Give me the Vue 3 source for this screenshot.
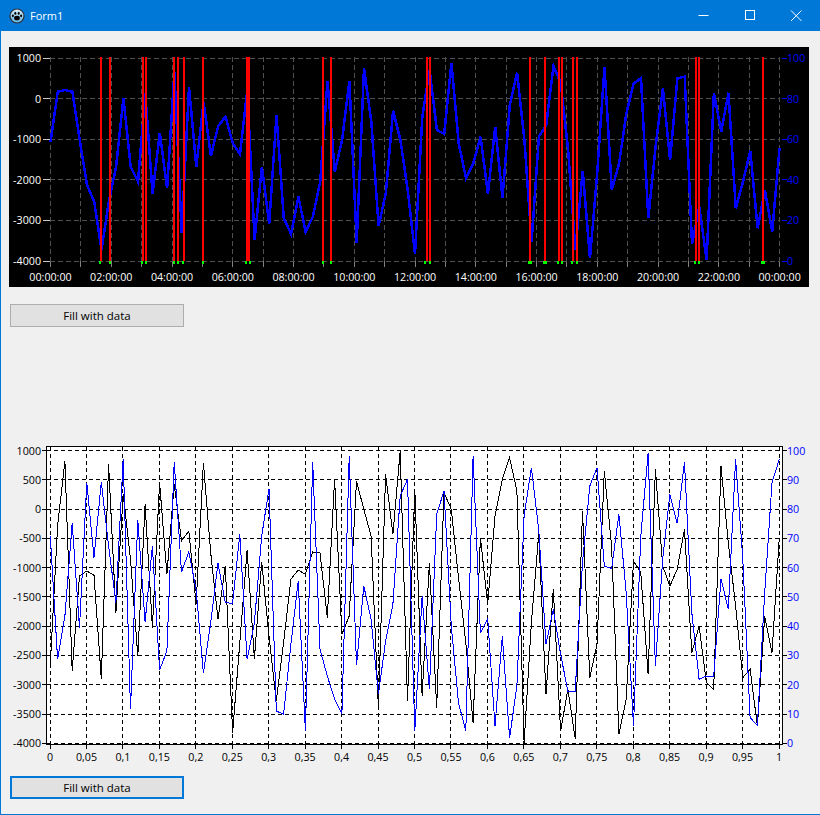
<script setup>
// step between two samples of a series, in px
const STEP = 7.29

// top chart: blue series, y in page px
const topSeries = [
  141.7, 91.7, 90, 91.7, 140, 185, 201.7, 250, 201.7, 166.7,
  98.3, 166.7, 181.7, 93.3, 194, 132.7, 188.3, 71.7, 232.7, 86.7,
  166.7, 101.7, 156, 126, 116.7, 143.3, 154, 90, 240, 166.7,
  224, 115, 218.3, 234, 196.7, 231.7, 216.7, 181.7, 80.7, 171.7,
  140, 80.7, 242.7, 68.3, 121.7, 226, 193.3, 110.7, 140, 190,
  254, 116.7, 70, 130, 134, 62.7, 143.3, 178.3, 163.3, 136.7,
  194, 126.7, 198.3, 105, 72.7, 140, 241.7, 136.7, 125, 66,
  83.3, 150, 250, 170.7, 258.3, 171.7, 66.7, 190, 163.3, 113.3,
  83.3, 78.3, 218.3, 146.7, 88.3, 160, 78.3, 76.7, 244, 206.7,
  260, 92.7, 131.7, 92.7, 208.3, 181.7, 150.7, 228.3, 190, 231.7,
  148.3
]

// red markers and the green points at their feet
const redLines = [101, 110, 143, 146, 174, 178, 184, 203, 247, 249, 323, 331, 427, 430, 530, 545, 559, 562, 573, 577, 696, 699, 763]
const greenDots = [100, 110, 142, 146, 174, 178, 183, 203, 246, 250, 323, 331, 425, 430, 529, 531, 544, 546, 558, 562, 572, 577, 695, 699, 762, 764]

// bottom chart: y in thirds of a px below the top of the plot
const blackTrace = [
  655, 240, 45, 675, 390, 375, 388, 698, 55, 500,
  145, 340, 630, 175, 545, 110, 385, 115, 285, 255,
  475, 50, 320, 520, 360, 860, 590, 312, 638, 348,
  570, 765, 590, 400, 372, 385, 318, 320, 515, 100,
  565, 510, 105, 190, 270, 785, 85, 265, 15, 765,
  130, 750, 350, 785, 140, 190, 395, 590, 830, 275,
  475, 210, 100, 35, 135, 890, 530, 265, 745, 430,
  855, 730, 878, 195, 695, 595, 75, 300, 865, 760,
  345, 380, 685, 70, 360, 420, 370, 250, 620, 540,
  710, 730, 60, 290, 480, 695, 670, 840, 510, 620,
  275
]
const blueTrace = [
  270, 640, 510, 232, 545, 110, 335, 108, 300, 470,
  38, 790, 222, 528, 300, 672, 615, 48, 378, 318,
  430, 682, 530, 352, 470, 472, 265, 640, 530, 270,
  128, 795, 805, 595, 405, 855, 48, 610, 690, 760,
  802, 30, 658, 420, 520, 745, 585, 475, 150, 100,
  855, 450, 730, 205, 135, 540, 770, 855, 30, 562,
  518, 840, 570, 875, 720, 210, 65, 250, 595, 490,
  625, 735, 735, 350, 120, 65, 360, 368, 205, 440,
  840, 270, 22, 660, 340, 145, 232, 48, 500, 700,
  690, 690, 398, 490, 40, 340, 815, 838, 440, 110,
  40
]

function toPoints(list, x0, convert = (v) => v) {
  return list.map((v, i) => `${(x0 + i * STEP).toFixed(1)},${convert(v).toFixed(1)}`).join(' ')
}
const plotY = (v) => 446 + v / 3

const topLine = toPoints(topSeries, 50.5)
const blackLine = toPoints(blackTrace, 50.3, plotY)
const blueLine = toPoints(blueTrace, 50.3, plotY)

// top chart axes
const topHours = Array.from({ length: 25 }, (_, i) => 50.5 + i * 30.38)
const topTimes = Array.from({ length: 13 }, (_, i) => ({
  x: 50.5 + i * 60.76,
  label: `${String((i * 2) % 24).padStart(2, '0')}:00:00`
}))
const topRows = Array.from({ length: 6 }, (_, i) => ({
  y: 58 + i * 40.6,
  left: String(1000 - i * 1000),
  right: String(100 - i * 20)
}))

// bottom chart axes
const bottomCols = Array.from({ length: 21 }, (_, i) => ({
  x: 50 + i * 36.45,
  label: String(i / 20).replace('.', ',')
}))
const bottomRows = Array.from({ length: 11 }, (_, i) => ({
  y: 450.5 + i * 29.28,
  left: String(1000 - i * 500),
  right: String(100 - i * 10)
}))
</script>

<template>
  <div class="window">
    <header class="titlebar">
      <svg class="app-icon" viewBox="0 0 16 16" width="16" height="16">
        <defs>
          <linearGradient id="ball" x1="0" y1="0" x2="0" y2="1">
            <stop offset="0" stop-color="#dfeef6" />
            <stop offset="1" stop-color="#5fb2de" />
          </linearGradient>
        </defs>
        <circle cx="8" cy="8" r="7.6" fill="#2b3038" />
        <circle cx="8" cy="8" r="6.4" fill="url(#ball)" />
        <ellipse cx="8" cy="10" rx="2.9" ry="2.3" fill="#000" />
        <ellipse cx="3.9" cy="7.8" rx="1" ry="1.4" fill="#000" />
        <ellipse cx="6.3" cy="5.3" rx="1" ry="1.5" fill="#000" />
        <ellipse cx="9.7" cy="5.3" rx="1" ry="1.5" fill="#000" />
        <ellipse cx="12.1" cy="7.8" rx="1" ry="1.4" fill="#000" />
      </svg>
      <span class="title">Form1</span>
      <div class="controls">
        <svg class="control" viewBox="0 0 46 31" width="46" height="31">
          <path d="M16.5 15.5h10" stroke="#fff" fill="none" />
        </svg>
        <svg class="control" viewBox="0 0 46 31" width="46" height="31">
          <rect x="17.5" y="10.5" width="9" height="9" stroke="#fff" fill="none" />
        </svg>
        <svg class="control" viewBox="0 0 46 31" width="46" height="31">
          <path d="M17 10.5l10.5 10.5M27.5 10.5L17 21" stroke="#fff" fill="none" />
        </svg>
      </div>
    </header>

    <main class="content">
      <svg class="chart dark" viewBox="9 47 800 240" width="800" height="240">
        <g class="crisp" stroke="#505050">
          <line v-for="x in topHours" :key="x" :x1="x" :x2="x" y1="57" y2="261" stroke-dasharray="5 3" />
          <line v-for="x in topHours" :key="'t' + x" :x1="x" :x2="x" y1="261" y2="267" stroke="#808080" />
          <line v-for="r in topRows" :key="r.y" x1="50" x2="780" :y1="r.y" :y2="r.y" stroke-dasharray="5 3" />
          <line v-for="r in topRows" :key="'l' + r.y" x1="43" x2="50" :y1="r.y" :y2="r.y" stroke="#c8c8c8" />
          <line v-for="r in topRows" :key="'r' + r.y" x1="782" x2="787" :y1="r.y" :y2="r.y" stroke="#0000ff" />
        </g>
        <polyline class="crisp" :points="topLine" fill="none" stroke="#0000ff" stroke-width="2.5" />
        <g class="crisp">
          <rect v-for="x in redLines" :key="x" :x="x - 1" y="57" width="2" height="204" fill="#ff0000" />
          <rect v-for="x in greenDots" :key="x" :x="x - 1" y="261" width="2" height="3" fill="#00ff00" />
        </g>
        <text v-for="r in topRows" :key="'a' + r.y" class="label white" x="41" :y="r.y" text-anchor="end" dominant-baseline="central">{{ r.left }}</text>
        <text v-for="r in topRows" :key="'b' + r.y" class="label blue" x="787" :y="r.y" dominant-baseline="central">{{ r.right }}</text>
        <text v-for="t in topTimes" :key="t.x" class="label white" :x="t.x" y="276.5" text-anchor="middle" dominant-baseline="central">{{ t.label }}</text>
      </svg>

      <button class="fill-btn first">Fill with data</button>

      <svg class="chart second-chart" viewBox="9 440 800 330" width="800" height="330">
        <rect class="crisp" x="46.5" y="446.5" width="736" height="298" fill="#ffffff" stroke="#000000" />
        <g class="crisp" stroke="#000000">
          <line v-for="c in bottomCols" :key="c.x" :x1="c.x" :x2="c.x" y1="447" y2="744" stroke-dasharray="4 3" />
          <line v-for="c in bottomCols" :key="'t' + c.x" :x1="c.x" :x2="c.x" y1="744" y2="749" />
          <line v-for="r in bottomRows" :key="r.y" x1="47" x2="782" :y1="r.y" :y2="r.y" stroke-dasharray="4 3" />
          <line v-for="r in bottomRows" :key="'l' + r.y" x1="42" x2="47" :y1="r.y" :y2="r.y" />
          <line v-for="r in bottomRows" :key="'r' + r.y" x1="782" x2="787" :y1="r.y" :y2="r.y" />
        </g>
        <polyline class="crisp" :points="blackLine" fill="none" stroke="#000000" />
        <polyline class="crisp" :points="blueLine" fill="none" stroke="#0000ff" />
        <text v-for="r in bottomRows" :key="'a' + r.y" class="label" x="41" :y="r.y" text-anchor="end" dominant-baseline="central">{{ r.left }}</text>
        <text v-for="r in bottomRows" :key="'b' + r.y" class="label blue" x="787" :y="r.y" dominant-baseline="central">{{ r.right }}</text>
        <text v-for="c in bottomCols" :key="'c' + c.x" class="label" :x="c.x" y="756.5" text-anchor="middle" dominant-baseline="central">{{ c.label }}</text>
      </svg>

      <button class="fill-btn focused">Fill with data</button>
    </main>
  </div>
</template>

<style scoped>
.window {
  display: flex;
  flex-direction: column;
  width: 820px;
  height: 815px;
  box-sizing: border-box;
  background: #f0f0f0;
  border-left: 1px solid #0078d7;
  border-bottom: 1px solid #0078d7;
  font-family: "Open Sans", "Noto Sans", sans-serif;
  overflow: hidden;
}

.titlebar {
  display: flex;
  align-items: center;
  flex: none;
  height: 31px;
  margin-left: -1px;
  background: #0078d7;
  color: #ffffff;
}

.app-icon {
  margin-left: 9px;
}

.title {
  margin-left: 5px;
  font-size: 11px;
}

.controls {
  display: flex;
  margin-left: auto;
}

.control {
  display: block;
}

.content {
  display: flex;
  flex-direction: column;
  align-items: flex-start;
  padding: 16px 0 0 8px;
}

.chart {
  display: block;
  flex: none;
}

.dark {
  background: #000000;
}

.crisp {
  shape-rendering: crispEdges;
}

.label {
  font-size: 10.7px;
  fill: #000000;
}

.white {
  fill: #ffffff;
}

.blue {
  fill: #0000ff;
}

.fill-btn {
  display: flex;
  align-items: center;
  justify-content: center;
  width: 174px;
  height: 23px;
  margin-left: 1px;
  padding: 0;
  box-sizing: border-box;
  background: #e1e1e1;
  border: 1px solid #adadad;
  color: #000000;
  font-family: inherit;
  font-size: 11.5px;
}

.first {
  margin-top: 17px;
}

.second-chart {
  margin-top: 113px;
}

.focused {
  margin-top: 6px;
  border: 2px solid #0078d7;
}
</style>

<style>
html,
body {
  margin: 0;
  background: #f0f0f0;
}
</style>
